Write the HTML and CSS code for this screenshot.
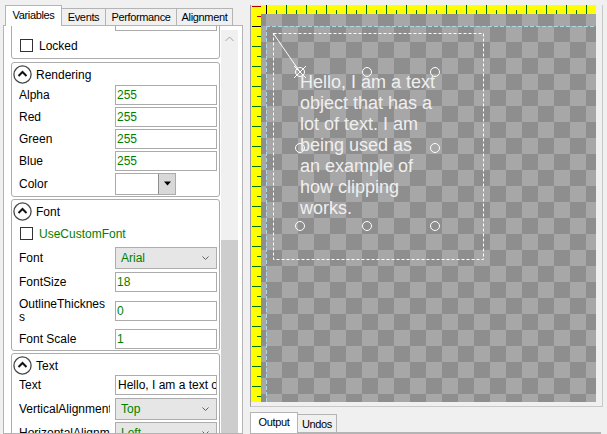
FILE: index.html
```html
<!DOCTYPE html>
<html>
<head>
<meta charset="utf-8">
<title>Editor</title>
<link rel="stylesheet" href="styles.css">
</head>
<body>
<div class="app">
  <div class="props">
    <div class="tabs">
      <div class="tab sel t-var">Variables</div>
      <div class="tab t-ev">Events</div>
      <div class="tab t-perf">Performance</div>
      <div class="tab t-align">Alignment</div>
    </div>
    <div class="tabpage">
      <div class="sections">
        <div class="section first">
          <div class="row h24"><span class="label"></span><div class="field"></div></div>
          <div class="row h25 chk-row"><span class="check"></span><span class="clabel">Locked</span></div>
        </div>

        <div class="section s-render">
          <div class="head">
            <svg class="hicon" width="19" height="19" viewBox="0 0 19 19"><circle cx="9.5" cy="9.5" r="8.6" fill="#fff" stroke="#454545" stroke-width="1.3"/><polyline points="5.5,11 9.5,7 13.5,11" fill="none" stroke="#111" stroke-width="2"/></svg>
            <span>Rendering</span>
          </div>
          <div class="row h22"><span class="label">Alpha</span><div class="field val">255</div></div>
          <div class="row h22"><span class="label">Red</span><div class="field val">255</div></div>
          <div class="row h22"><span class="label">Green</span><div class="field val">255</div></div>
          <div class="row h22"><span class="label">Blue</span><div class="field val">255</div></div>
          <div class="row h23"><span class="label">Color</span>
            <div class="colorbox"><span class="cb-btn"><svg width="7" height="5" viewBox="0 0 7 5"><polygon points="0,0.5 7,0.5 3.5,4.5" fill="#000"/></svg></span></div>
          </div>
        </div>

        <div class="section s-font">
          <div class="head">
            <svg class="hicon" width="19" height="19" viewBox="0 0 19 19"><circle cx="9.5" cy="9.5" r="8.6" fill="#fff" stroke="#454545" stroke-width="1.3"/><polyline points="5.5,11 9.5,7 13.5,11" fill="none" stroke="#111" stroke-width="2"/></svg>
            <span>Font</span>
          </div>
          <div class="row h25 chk-row"><span class="check"></span><span class="clabel green">UseCustomFont</span></div>
          <div class="row h24"><span class="label">Font</span>
            <div class="combo"><span class="val">Arial</span><svg width="7" height="4" viewBox="0 0 7 4"><polyline points="0.5,0.5 3.5,3.5 6.5,0.5" fill="none" stroke="#606060"/></svg></div>
          </div>
          <div class="row h24"><span class="label">FontSize</span><div class="field val">18</div></div>
          <div class="row h33"><span class="label two">OutlineThicknes<br>s</span><div class="field val">0</div></div>
          <div class="row h23"><span class="label">Font Scale</span><div class="field val">1</div></div>
        </div>

        <div class="section s-text">
          <div class="head">
            <svg class="hicon" width="19" height="19" viewBox="0 0 19 19"><circle cx="9.5" cy="9.5" r="8.6" fill="#fff" stroke="#454545" stroke-width="1.3"/><polyline points="5.5,11 9.5,7 13.5,11" fill="none" stroke="#111" stroke-width="2"/></svg>
            <span>Text</span>
          </div>
          <div class="row h22 top"><span class="label">Text</span><div class="field plain">Hello, I am a text object</div></div>
          <div class="row h24"><span class="label">VerticalAlignment</span>
            <div class="combo"><span class="val">Top</span><svg width="7" height="4" viewBox="0 0 7 4"><polyline points="0.5,0.5 3.5,3.5 6.5,0.5" fill="none" stroke="#606060"/></svg></div>
          </div>
          <div class="row h24"><span class="label">HorizontalAlignment</span>
            <div class="combo"><span class="val">Left</span><svg width="7" height="4" viewBox="0 0 7 4"><polyline points="0.5,0.5 3.5,3.5 6.5,0.5" fill="none" stroke="#606060"/></svg></div>
          </div>
        </div>
      </div>
      <div class="scrollbar">
        <div class="sb-up"><svg width="9" height="6" viewBox="0 0 9 6"><polyline points="0.5,5 4.5,1 8.5,5" fill="none" stroke="#a6a6a6"/></svg></div>
        <div class="sb-track"></div>
        <div class="sb-thumb"></div>
      </div>
    </div>
  </div>

  <div class="editor">
    <div class="view">
      <div class="stage">
        <div class="ruler-left"></div>
        <div class="ruler-top"></div>
        <div class="canvas">
          <svg class="overlay" width="335" height="388" viewBox="0 0 335 388">
            <g fill="none" stroke="#add8e6" stroke-dasharray="4 2">
              <line x1="5" y1="12.5" x2="335" y2="12.5"/>
              <line x1="5.5" y1="12" x2="5.5" y2="388"/>
            </g>
            <rect x="12.5" y="19.5" width="210" height="226" fill="none" stroke="#fff" stroke-dasharray="3 2"/>
            <g fill="none" stroke="#fff">
              <line x1="12" y1="19" x2="39" y2="58"/>
              <circle cx="39" cy="58" r="4.5"/>
              <line x1="33" y1="52" x2="45" y2="64"/>
              <line x1="33" y1="64" x2="45" y2="52"/>
              <circle cx="106" cy="58" r="4.5"/>
              <circle cx="174" cy="58" r="4.5"/>
              <circle cx="39" cy="134" r="4.5"/>
              <circle cx="174" cy="134" r="4.5"/>
              <circle cx="39" cy="212" r="4.5"/>
              <circle cx="106" cy="212" r="4.5"/>
              <circle cx="174" cy="212" r="4.5"/>
            </g>
          </svg>
          <div class="caption">Hello, I am a text<br>object that has a<br>lot of text. I am<br>being used as<br>an example of<br>how clipping<br>works.</div>
        </div>
      </div>
    </div>
    <div class="btabs">
      <div class="btab sel b-out">Output</div>
      <div class="btab b-und">Undos</div>
    </div>
    <div class="bpage"></div>
  </div>
</div>
</body>
</html>
```

FILE: styles.css
```css
* { box-sizing: border-box; }
html, body { margin: 0; padding: 0; }
body {
  width: 607px;
  height: 434px;
  overflow: hidden;
  background: #f0f0f0;
  font-family: "Liberation Sans", Arial, sans-serif;
  color: #000;
}
.app { display: flex; height: 434px; }

/* ---------- left property panel ---------- */
.props {
  width: 245px;
  flex: none;
  padding-left: 3px;
  display: flex;
  flex-direction: column;
}
.tabs {
  display: flex;
  align-items: flex-end;
  height: 25px;
  padding: 5px 0 0 2px;
  flex: none;
}
.tab {
  height: 17px;
  border: 1px solid #b4b4b4;
  border-bottom: 0;
  background: #f0f0f0;
  margin-left: -1px;
  display: flex;
  align-items: center;
  justify-content: center;
  font-size: 11px;
  letter-spacing: -0.35px;
  white-space: nowrap;
}
.tab.sel {
  height: 21px;
  background: #fff;
  margin-left: 0;
  margin-bottom: -1px;
  position: relative;
  z-index: 1;
  padding-bottom: 2px;
}
.t-var { width: 57px; }
.t-ev { width: 45px; }
.t-perf { width: 72px; }
.t-align { width: 57px; }

.tabpage {
  flex: 1;
  width: 240px;
  display: flex;
  border: 1px solid #b4b4b4;
  background: #fff;
  overflow: hidden;
}
.sections { width: 209px; margin-left: 7px; flex: none; }
.section {
  border: 1px solid #acacac;
  border-radius: 3px;
  padding: 2px 0 1px 0;
  background: #fff;
}
.section.first { margin-top: -18px; padding: 0; }
.s-render { margin-top: 3px; }
.s-font { margin-top: 2px; padding-bottom: 0; }
.s-text { margin-top: 2px; }

.head {
  display: flex;
  align-items: center;
  gap: 4px;
  height: 19px;
  padding-left: 1px;
  font-size: 12px;
}
.hicon { flex: none; display: block; }

.row {
  display: flex;
  align-items: center;
  padding-left: 7px;
  font-size: 12px;
}
.row.top { align-items: flex-start; }
.h22 { height: 22px; }
.h23 { height: 23px; }
.h24 { height: 24px; }
.h25 { height: 25px; }
.h33 { height: 33px; }

.label {
  width: 91px;
  margin-right: 5px;
  flex: none;
  white-space: nowrap;
  overflow: hidden;
}
.row.top .label { line-height: 20px; }
.label.two { white-space: normal; line-height: 13px; }

.field {
  width: 102px;
  height: 20px;
  flex: none;
  border: 1px solid #ababab;
  background: #fff;
  padding-left: 1px;
  line-height: 18px;
  font-size: 12px;
  white-space: nowrap;
  overflow: hidden;
}
.field.plain { padding-left: 2px; color: #000; }
.val, .green { color: #008000; }

.combo {
  width: 102px;
  height: 22px;
  flex: none;
  border: 1px solid #adadad;
  background: #e6e6e6;
  display: flex;
  align-items: center;
  justify-content: space-between;
  padding: 0 7px 0 5px;
}
.colorbox {
  width: 61px;
  height: 22px;
  flex: none;
  border: 1px solid #ababab;
  background: #fff;
  display: flex;
  justify-content: flex-end;
}
.cb-btn {
  width: 17px;
  border-left: 1px solid #8e8e8e;
  background: #d8d8d8;
  display: flex;
  align-items: center;
  justify-content: center;
}
.cb-btn svg { display: block; }

.chk-row { padding-left: 8px; }
.check {
  width: 13px;
  height: 13px;
  flex: none;
  border: 1px solid #333;
  background: #fff;
}
.clabel { margin-left: 6px; }

.scrollbar {
  width: 17px;
  flex: none;
  margin: 4px 4px 0 1px;
  background: #f0f0f0;
  display: flex;
  flex-direction: column;
}
.sb-up { height: 17px; display: flex; align-items: center; justify-content: center; }
.sb-up svg { display: block; }
.sb-track { height: 193px; }
.sb-thumb { flex: 1; background: #cdcdcd; }

/* ---------- right editor ---------- */
.editor {
  flex: 1;
  display: flex;
  flex-direction: column;
  padding: 5px 4px 0 5px;
}
.view {
  height: 402px;
  flex: none;
  border-left: 1px solid #9c9c9c;
  border-right: 1px solid #c8c8c8;
  border-bottom: 1px solid #c8c8c8;
}
.stage {
  display: grid;
  grid-template-columns: 10px 335px;
  grid-template-rows: 9px 388px;
}
.ruler-left {
  grid-row: 1 / 3;
  grid-column: 1;
  background:
    linear-gradient(#b00000, #b00000) right 0 top 1px / 9px 1px no-repeat,
    linear-gradient(#b00000, #b00000) right 0 top 11px / 4px 1px no-repeat,
    linear-gradient(#000, #000) right 0 top 21px / 9px 1px no-repeat,
    linear-gradient(#007000 0 1px, transparent 1px) right 0 top 1px / 9px 20px repeat-y,
    linear-gradient(#007000 0 1px, transparent 1px) right 0 top 11px / 4px 20px repeat-y,
    #ffff00;
}
.ruler-top {
  grid-row: 1;
  grid-column: 2;
  background:
    linear-gradient(#000, #000) 5px 0 / 1px 100% no-repeat,
    linear-gradient(to right, #007000 0 1px, transparent 1px) 5px 0 / 20px 100% repeat-x,
    linear-gradient(to right, #007000 0 1px, transparent 1px) 15px 100% / 20px 4px repeat-x,
    #ffff00;
}
.canvas {
  grid-row: 2;
  grid-column: 2;
  position: relative;
  overflow: hidden;
  background: conic-gradient(#a7a7a7 25%, #8e8e8e 0 50%, #a7a7a7 0 75%, #8e8e8e 0);
  background-size: 32px 32px;
  background-position: 5px 12px;
}
.overlay { position: absolute; left: 0; top: 0; display: block; }
.caption {
  position: absolute;
  left: 39px;
  top: 58px;
  font-size: 18px;
  line-height: 21px;
  color: #efefef;
  white-space: nowrap;
}

.btabs {
  display: flex;
  align-items: flex-end;
  height: 20px;
  margin-top: 5px;
  flex: none;
}
.btab {
  height: 18px;
  border: 1px solid #b4b4b4;
  border-bottom: 0;
  background: #f0f0f0;
  margin-left: -1px;
  display: flex;
  align-items: center;
  justify-content: center;
  font-size: 11px;
  letter-spacing: -0.35px;
}
.btab.sel {
  height: 21px;
  margin-left: 0;
  margin-bottom: -1px;
  background: #fff;
  position: relative;
  z-index: 1;
  padding-bottom: 2px;
}
.b-out { width: 48px; }
.b-und { width: 40px; }
.bpage {
  height: 12px;
  margin-right: 2px;
  border: 1px solid #b4b4b4;
  background: #fff;
}
```
